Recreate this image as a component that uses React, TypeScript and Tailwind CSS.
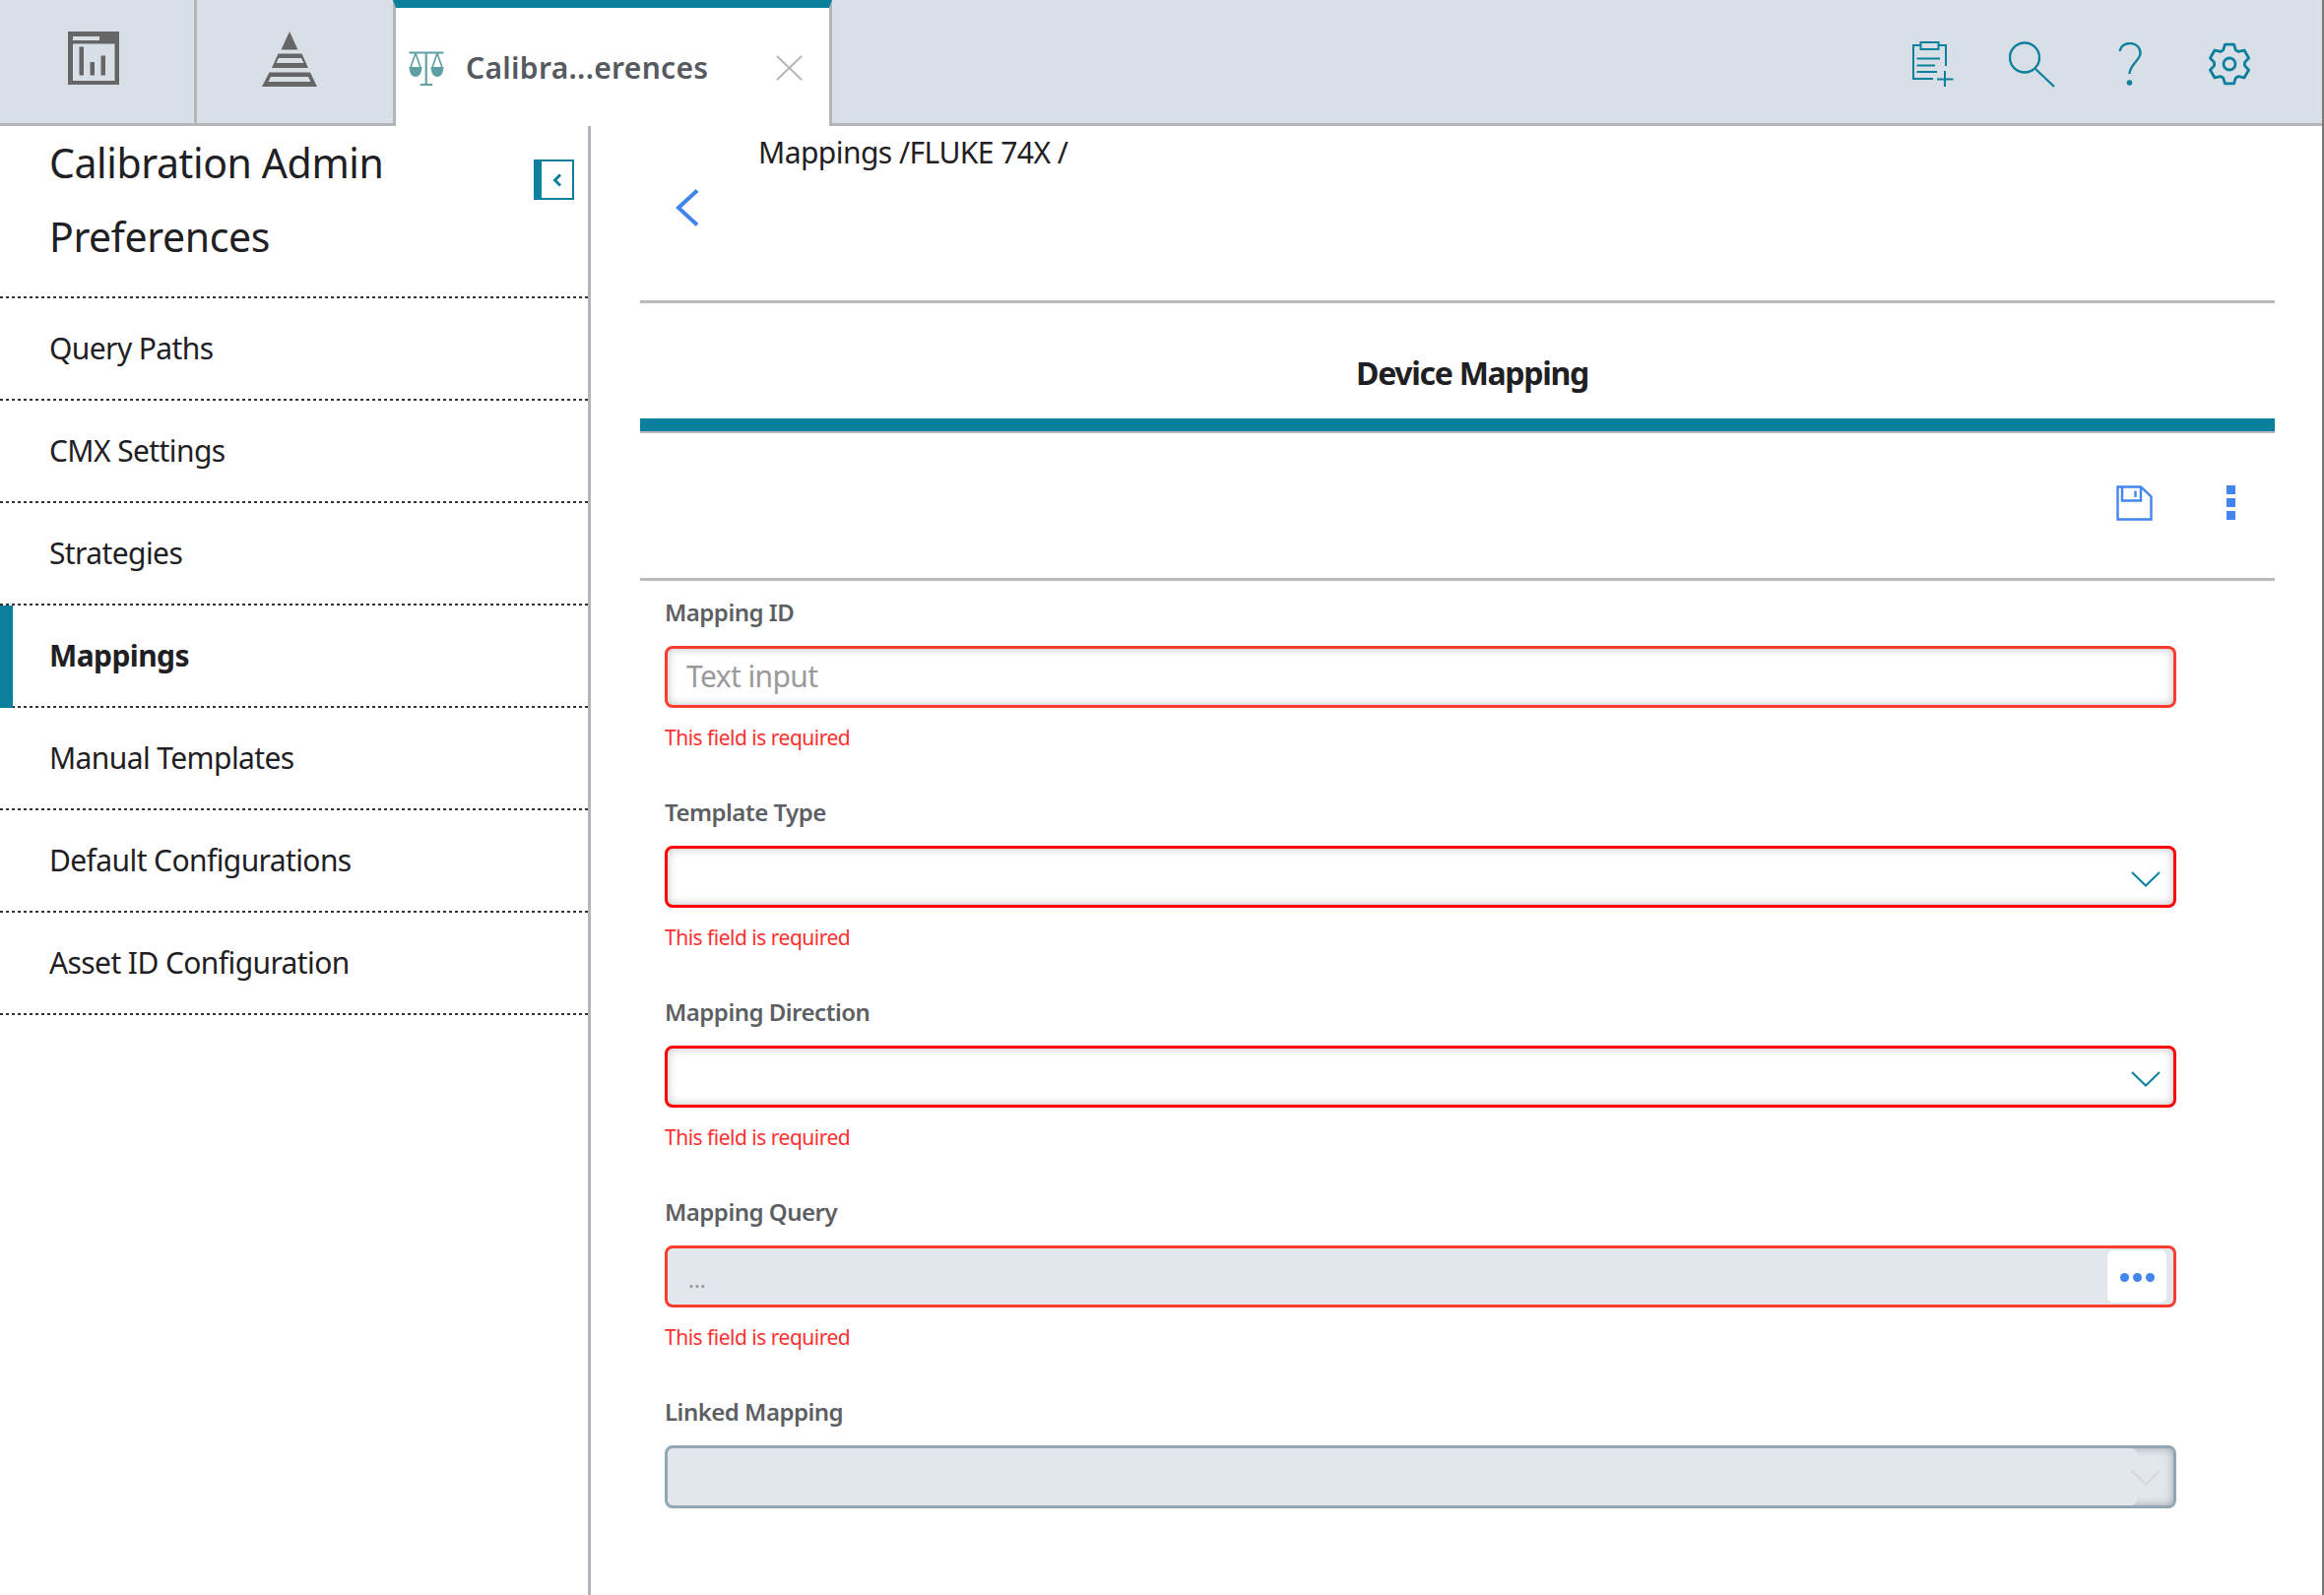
const font = "[font-family:'Noto_Sans',sans-serif]";
const dots = "bg-[repeating-linear-gradient(90deg,#333333_0_3px,transparent_3px_6px)] bg-[length:100%_2px] bg-bottom bg-no-repeat";

function Gear() {
  const pts: string[] = [];
  for (let k = 0; k < 6; k++) {
    const a = -90 + 60 * k;
    [[15.5, -24], [20.5, -13], [20.5, 13], [15.5, 24]].forEach(([r, d]) => {
      const t = ((a + d) * Math.PI) / 180;
      pts.push(`${(22 + r * Math.cos(t)).toFixed(2)},${(22 + r * Math.sin(t)).toFixed(2)}`);
    });
  }
  return (
    <svg width="44" height="44" viewBox="0 0 44 44" fill="none" stroke="#0b809e" strokeWidth="2.8" strokeLinejoin="round">
      <polygon points={pts.join(" ")} />
      <circle cx="22" cy="22" r="6" />
    </svg>
  );
}

function Clipboard() {
  return (
    <svg width="42" height="46" viewBox="0 0 42 46" fill="none" stroke="#0b809e" strokeWidth="2">
      <path d="M21 38 H1 V4 H8 M27 4 H34 V25" />
      <rect x="8.5" y="1" width="18" height="7" />
      <path d="M4.5 17.5 H28 M4.5 24.5 H23 M4.5 31 H25 M25 38.5 H41.5 M33 30 V46" />
    </svg>
  );
}

function Search() {
  return (
    <svg width="47" height="47" viewBox="0 0 47 47" fill="none" stroke="#0b809e" strokeWidth="2.3">
      <circle cx="16" cy="16.5" r="15" />
      <path d="M27 28 L46 46" />
    </svg>
  );
}

function Question() {
  return (
    <svg width="24" height="45" viewBox="0 0 24 45" fill="none" stroke="#0b809e" strokeWidth="2.3">
      <path d="M1.5 9 C3 3 7 1 12 1 C18 1 22.5 5 22.5 11 C22.5 18 12 22 11.5 32" />
      <circle cx="11.5" cy="41" r="2.8" fill="#0b809e" stroke="none" />
    </svg>
  );
}

function ReportIcon() {
  return (
    <svg width="52" height="54" viewBox="0 0 52 54">
      <rect width="52" height="54" fill="#666666" />
      <rect x="5" y="5" width="27" height="4" fill="#d8dfe6" />
      <rect x="5" y="12.5" width="42.5" height="37.5" fill="#d8dfe6" />
      <rect x="11.5" y="15.5" width="4.5" height="29" fill="#666666" />
      <rect x="22.5" y="31" width="4.5" height="13.5" fill="#666666" />
      <rect x="33.5" y="24.5" width="4.5" height="20" fill="#666666" />
    </svg>
  );
}

function PyramidIcon() {
  return (
    <svg width="56" height="56" viewBox="0 0 56 56">
      <path fill="#666666" d="M28 0 L36.5 18.5 H19.5 Z" />
      <path fill="#666666" fillRule="evenodd" d="M16.5 22.5 H40.5 L47 37 H10 Z M17 27 L14.5 32 H42.5 L40 27 Z" />
      <path fill="#666666" fillRule="evenodd" d="M7.5 41.5 H49 L56 56 H0 Z M9 46 L6.5 51 H49.5 L47 46 Z" />
    </svg>
  );
}

function ScaleIcon() {
  return (
    <svg width="36" height="36" viewBox="0 0 33.5 36" preserveAspectRatio="none" fill="none" stroke="#5f9fa3" strokeWidth="2">
      <path d="M0.5 1.5 H33 M16.5 1.5 V33.5 M11 34 H22.5" />
      <path d="M6.5 2 L2 16 M6.5 2 L11 16 M27 2 L22.5 16 M27 2 L31.5 16" strokeWidth="1.5" />
      <path d="M0.5 16 H12.5 C12.5 22 10 26 6.5 26 C3 26 0.5 22 0.5 16 Z M21 16 H33 C33 22 30.5 26 27 26 C23.5 26 21 22 21 16 Z" fill="#5f9fa3" stroke="none" />
    </svg>
  );
}

function Chevron({ color }: { color: string }) {
  return (
    <svg className="relative z-10" width="30" height="16" viewBox="0 0 30 16" fill="none" stroke={color} strokeWidth="2">
      <path d="M1 1 L15 14.5 L29 1" />
    </svg>
  );
}

function Field({ label, error, children }: { label: string; error?: boolean; children: React.ReactNode }) {
  return (
    <div className="flex flex-col">
      <div className="h-[32px] text-[24px] leading-[32px] font-semibold text-[#5c5f63] tracking-[-0.5px]">{label}</div>
      <div className="mt-[18px] h-[63px]">{children}</div>
      {error && <div className="mt-[15px] h-[30px] text-[21px] leading-[30px] text-[#ff3030] tracking-[-0.5px]">This field is required</div>}
    </div>
  );
}

function SelectBox({ color }: { color: string }) {
  return (
    <div className={`h-full rounded-lg border-[3px] ${color} bg-white shadow-[inset_0_0_10px_rgba(0,0,0,0.25)] flex items-center justify-end pr-[13px] pt-[4px]`}>
      <Chevron color="#0b809e" />
    </div>
  );
}

const items = ["Query Paths", "CMX Settings", "Strategies", "Mappings", "Manual Templates", "Default Configurations", "Asset ID Configuration"];

export default function App() {
  return (
    <div className={`${font} w-[2360px] h-[1620px] flex flex-col bg-white overflow-hidden border-r-2 border-[#777777] text-[#1f2023]`}>
      <header className="h-[128px] shrink-0 bg-[#d8dfe6] border-b-[3px] border-[#b5b5ba] flex items-stretch">
        <div className="w-[200px] border-r-[3px] border-[#b5b5ba] flex items-start justify-start pl-[69px] pt-[32px]">
          <ReportIcon />
        </div>
        <div className="w-[199px] flex items-start justify-start pl-[66px] pt-[32px]">
          <PyramidIcon />
        </div>
        <div className="w-[446px] -mb-[3px] relative z-10 bg-white border-x-[3px] border-x-[#b5b5ba] border-t-[8px] border-t-[#0b809e] flex items-start pl-[13px] pt-[44px]">
          <ScaleIcon />
          <span className="ml-[22px] -mt-[1px] text-[30px] leading-[36px] font-semibold text-[#555a60] tracking-[0.3px]">Calibra...erences</span>
          <svg className="ml-[69px] mt-[4px]" width="27" height="26" viewBox="0 0 27 26" fill="none" stroke="#b5b5b5" strokeWidth="2">
            <path d="M1 1 L26 25 M26 1 L1 25" />
          </svg>
        </div>
        <div className="flex-1 flex items-start pt-[42px] pl-[1097px]">
          <Clipboard />
          <div className="ml-[56px]"><Search /></div>
          <div className="ml-[64px] mt-[1px]"><Question /></div>
          <div className="ml-[67px] mt-[1px]"><Gear /></div>
        </div>
      </header>

      <div className="flex-1 flex min-h-0">
        <aside className="w-[600px] shrink-0 border-r-[3px] border-[#b5b5ba]">
          <div className={`h-[175px] ${dots} flex items-start justify-between pl-[50px] pr-[14px]`}>
            <h1 className="text-[41px] leading-[75px] font-normal tracking-[-0.4px]">Calibration Admin<br />Preferences</h1>
            <button className="mt-[34px] w-[41px] h-[41px] border-[2.5px] border-l-[8px] border-[#0b809e] flex items-center justify-center">
              <svg width="10" height="14" viewBox="0 0 10 14" fill="none" stroke="#0b809e" strokeWidth="3">
                <path d="M8 1.5 L2.5 7 L8 12.5" />
              </svg>
            </button>
          </div>
          {items.map((t) => {
            const active = t === "Mappings";
            return (
              <div key={t} className={`relative h-[104px] ${dots} flex items-center pl-[50px] pb-[3px] text-[30px] tracking-[-0.6px]`}>
                {active && <span className="absolute left-0 top-0 bottom-0 w-[13px] bg-[#0b809e]" />}
                <span className={active ? "font-bold" : ""}>{t}</span>
              </div>
            );
          })}
        </aside>

        <main className="flex-1 pl-[50px] pr-[48px]">
          <div className="h-[180px] border-b-[3px] border-[#b9b9be]">
            <div className="pl-[120px] pt-[7px] text-[30px] leading-[40px] tracking-[-0.55px]">Mappings /FLUKE 74X /</div>
            <svg className="ml-[36px] mt-[17px]" width="24" height="38" viewBox="0 0 24 38" fill="none" stroke="#4285ec" strokeWidth="4">
              <path d="M22 1.5 L3 19 L22 36.5" />
            </svg>
          </div>
          <div className="h-[117px] flex items-center justify-center pl-[30px] pt-[24px] text-[32px] font-bold tracking-[-1.3px]">Device Mapping</div>
          <div className="h-[15px] bg-[#0b809e] border-b-2 border-[#b9b9be]" />
          <div className="h-[150px] border-b-[3px] border-[#b9b9be] flex items-start justify-end pt-[53px] pr-[40px]">
            <svg width="37" height="36" viewBox="0 0 37 36" fill="none" stroke="#4285ec" strokeWidth="2.4">
              <path d="M1.5 1.5 H25 L35.5 11.5 V34.5 H1.5 Z" />
              <path d="M6 1.5 V15.5 H25 V1.5" />
              <path d="M19.5 5.5 V12" />
            </svg>
            <div className="ml-[75px] flex flex-col gap-[4px]">
              <span className="block w-[9px] h-[9px] bg-[#4285ec]" />
              <span className="block w-[9px] h-[9px] bg-[#4285ec]" />
              <span className="block w-[9px] h-[9px] bg-[#4285ec]" />
            </div>
          </div>

          <div className="pl-[25px] pr-[100px] pt-[16px] flex flex-col gap-[45px]">
            <Field label="Mapping ID" error>
              <input
                placeholder="Text input"
                className="w-full h-full rounded-lg border-[3px] border-[#f93c30] bg-white shadow-[inset_0_0_10px_rgba(0,0,0,0.25)] pl-[19px] pb-[2px] text-[30px] tracking-[-0.6px] outline-none placeholder:text-[#9a9a9a]"
              />
            </Field>
            <Field label="Template Type" error><SelectBox color="border-[#ff0000]" /></Field>
            <Field label="Mapping Direction" error><SelectBox color="border-[#ff0000]" /></Field>
            <Field label="Mapping Query" error>
              <div className="h-full rounded-lg border-[3px] border-[#f93c30] bg-[#e2e7ee] flex items-center justify-between pl-[21px] pr-[7px]">
                <span className="text-[22px] leading-none text-[#959595] mt-[4px]">...</span>
                <button className="w-[60px] h-[53px] bg-white rounded-md flex items-center justify-center gap-[4px] pt-[2px]">
                  <span className="block w-[9px] h-[9px] rounded-full bg-[#4285ec]" />
                  <span className="block w-[9px] h-[9px] rounded-full bg-[#4285ec]" />
                  <span className="block w-[9px] h-[9px] rounded-full bg-[#4285ec]" />
                </button>
              </div>
            </Field>
            <Field label="Linked Mapping">
              <div className="h-[64px] rounded-lg border-[3px] border-[#93a7b2] bg-[#e2e7ee] shadow-[inset_0_0_10px_rgba(0,0,0,0.3)] flex items-center justify-end relative pr-[13px] pt-[2px]">
                <span className="absolute left-0 top-0 bottom-0 w-[1492px] bg-[#e2e7ee] rounded-md" />
                <Chevron color="#d6d6d2" />
              </div>
            </Field>
          </div>
        </main>
      </div>
    </div>
  );
}
